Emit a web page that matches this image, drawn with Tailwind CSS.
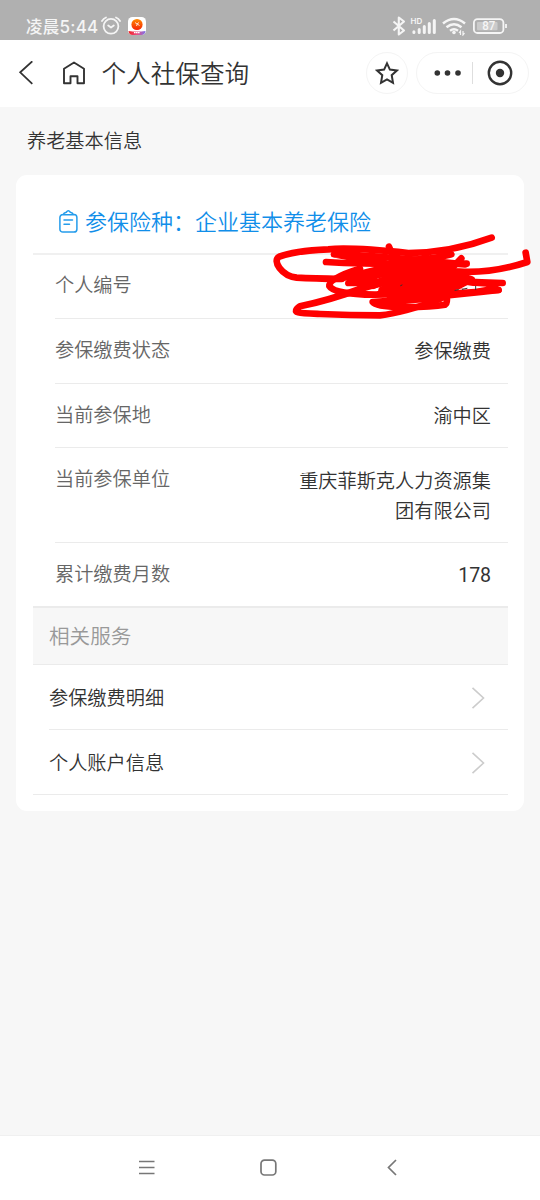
<!DOCTYPE html>
<html lang="zh-CN">
<head>
<meta charset="utf-8">
<title>个人社保查询</title>
<script src="https://cdn.jsdelivr.net/npm/@tailwindcss/browser@4"></script>
</head>
<body class="w-[540px] h-[1200px] overflow-hidden flex flex-col bg-[#f7f7f7] text-[#333] font-[350] font-['Roboto','Noto_Sans_CJK_SC',sans-serif]">
<!-- Status bar -->
<header class="h-10 shrink-0 bg-[#b0b0b0] flex items-start justify-between pl-[26px] pr-8 pt-4 text-[#f5f5f5]">
  <div class="flex items-center h-5">
    <span class="text-[16.5px] font-medium leading-5 whitespace-nowrap w-[75px] pt-[2px]"><span class="tracking-[0.3px]">凌晨</span><span class="font-['Inter'] font-medium text-[17px] tracking-[0.2px]">5:44</span></span>
    <svg class="w-5 h-5 shrink-0" viewBox="0 0 20 20" fill="none" stroke="currentColor" stroke-width="1.8" stroke-linecap="round" stroke-linejoin="round"><circle cx="10" cy="10.3" r="7.4"/><path d="M1 5Q2.5 2.5 5 1.5M19 5Q17.500 2.500 15 1.500M7.200 9.500l2.800 2 2.800-2"/></svg>
    <svg class="w-[18px] h-[18px] ml-[7px] shrink-0" viewBox="0 0 18 18"><defs><linearGradient id="sun" x1="0" y1="0" x2="0" y2="1"><stop offset="0" stop-color="#ff8a00"/><stop offset="1" stop-color="#f52306"/></linearGradient><linearGradient id="strip"><stop offset="0" stop-color="#ee2222"/><stop offset=".5" stop-color="#ed4f83"/><stop offset="1" stop-color="#7774ea"/></linearGradient></defs><rect width="18" height="18" rx="4.500" fill="#fff"/><path d="M.5 14Q9 15 17.500 14Q17 18 13.500 18H4.500Q1 18 .5 14Z" fill="url(#strip)"/><circle cx="9" cy="7.500" r="5.600" fill="url(#sun)"/><path d="M7 5.500l2 1.500 2-1.500m-2.500 3.500l.8-2 2.200 1.500" stroke="#fff" stroke-width=".8" fill="none"/><path d="M6 15.700h6" stroke="#fff" stroke-width="1.300" stroke-dasharray="1.500 .4"/></svg>
  </div>
  <svg class="w-[118px] h-5 mr-[-1px]" viewBox="391 16 118 20" fill="none" stroke="currentColor" stroke-width="2.100">
    <path d="M393.500 21.500l10.500 9-5.200 4V17.500l5.200 4-10.500 9" stroke-linejoin="round"/>
    <text x="410.500" y="24" font-size="8" font-weight="600" fill="currentColor" stroke="none" font-family="Inter">HD</text>
    <g stroke-width="3" stroke-linecap="round"><path d="M413.900 31.800v.7M419.200 29.500v3M424.300 26.500v6M429.300 23.500v9M434.300 20.500v12"/></g>
    <g stroke-width="2.500"><path d="M443 23.500q11-9 22 0M446.500 27.300q7.500-6 15 0M450 30.700q4-2.800 8 0"/></g>
    <circle cx="454" cy="32.500" r="1.800" fill="currentColor" stroke="none"/>
    <path d="M460.500 35v-4l-1.500 2M463 31v4l1.500-2" stroke-width="1.200"/>
    <rect x="473.900" y="19.200" width="29.500" height="13.800" rx="3.600" stroke-width="1.800"/>
    <rect x="477" y="22" width="20.500" height="8.200" rx="1" fill="#cbcbcb" stroke="none"/>
    <text x="482.300" y="30.400" font-size="12" font-weight="500" textLength="13" lengthAdjust="spacingAndGlyphs" fill="currentColor" stroke="none" font-family="Roboto">87</text>
    <path d="M506 24v4" stroke-width="1.800"/>
  </svg>
</header>
<!-- Title bar -->
<nav class="h-[66.500px] shrink-0 bg-white flex items-center pr-[11px] pl-[18px]">
  <svg class="w-4 h-6" viewBox="0 0 16 24" fill="none" stroke="#333" stroke-width="1.800"><path d="M14.300 .3L2.200 11.300l12.100 11.500"/></svg>
  <svg class="w-6 h-6 ml-7" viewBox="0 0 24 24" fill="none" stroke="#333" stroke-width="1.900" stroke-linejoin="round"><path d="M2 7.700L12 1.500l10 6.200V22.300h-6.500v-7h-7v7H2Z"/></svg>
  <h1 class="ml-[15.500px] pt-[3px] text-[24.600px] leading-8 whitespace-nowrap">个人社保查询</h1>
  <div class="ml-auto w-[42px] h-[42px] rounded-full border border-[#f4f4f4] flex items-center justify-center">
    <svg class="w-6 h-6" viewBox="0 0 24 24" fill="none" stroke="#333" stroke-width="2" stroke-linejoin="miter"><path d="M12 2.300l2.900 6.300 7 .9-5.200 4.700 1.300 7.700-6-3.400-6 3.400 1.300-7.700L2.100 9.500l7-.9Z"/></svg>
  </div>
  <div class="ml-2 w-[113px] h-[42px] rounded-full border border-[#f4f4f4] flex items-center pl-[17px]">
    <svg class="w-[28px] h-6" viewBox="0 0 28 24" fill="#333"><circle cx="3.300" cy="12" r="2.800"/><circle cx="13.500" cy="12" r="2.800"/><circle cx="24" cy="12" r="2.800"/></svg>
    <i class="w-px h-[22px] bg-[#dedede] ml-[10px]"></i>
    <svg class="w-[26px] h-[26px] ml-[14px]" viewBox="0 0 26 26" fill="none"><circle cx="13" cy="13" r="11.200" stroke="#333" stroke-width="2.400"/><circle cx="13" cy="13" r="4.200" fill="#333"/></svg>
  </div>
</nav>
<main class="flex-1 px-4">
  <h2 class="h-[68.500px] pl-[11px] pt-[20.500px] text-[19.200px] leading-[30px]">养老基本信息</h2>
  <section class="bg-white h-[636px] rounded-[11px] px-[17px] pr-4">
    <div class="h-[79.500px] border-b-2 border-[#f0f0f0] flex items-center pt-[16px] pl-[25px] text-[22px] text-[#108ee9]">
      <svg class="w-5 h-6 mr-[7px]" viewBox="0 0 20 24" fill="none" stroke="#249ceb" stroke-width="1.500" stroke-linecap="round" stroke-linejoin="round"><path d="M4.800 4.500H5A3 3 0 0 0 1.900 7.500v11.700a2.900 2.900 0 0 0 2.900 2.900h11.200a2.900 2.900 0 0 0 2.900-2.900V7.500A3 3 0 0 0 16 4.500h-.5M5.100 4.700Q5.800 2.700 8.300 2.300Q10.300-.6 12.300 2.300Q14.800 2.700 15.500 4.700ZM6 9.900h8.500M6 14.200h5.500"/></svg>
      <span class="leading-8 pt-[3px]">参保险种：企业基本养老保险</span>
    </div>
    <div class="pl-[22px] text-[19.200px] leading-[30px]">
      <div class="relative h-[64.500px] border-b border-[#ebebeb] pt-[16.500px] text-[#666]">个人编号
        <!-- Red marker over the personal number -->
        <svg class="absolute left-[205px] top-[-29.500px] w-[280px] h-[105px] z-10" viewBox="0 0 840 315" fill="none" stroke="#f00" stroke-width="20" stroke-linecap="round" stroke-linejoin="round">
          <path d="M695 38Q570 84 445 84Q270 66 205 73Q100 78 58 95C35 107 65 153 110 158Q160 161 245 162"/>
          <path d="M797 83l5 28Q700 145 600 140Q480 135 405 122L222 88Q360 92 615 118"/>
          <path d="M198 111Q340 120 620 116M387 65L405 108M574 88Q500 108 430 103"/>
          <path d="M300 131Q205 160 208 183Q222 208 345 209Q520 205 715 195Q680 177 600 166Q450 175 265 174Q340 150 415 116"/>
          <path d="M728 174Q600 172 480 158Q390 164 300 192Q210 225 120 244C90 265 120 265 180 267Q270 271 360 271Q430 264 540 222"/>
          <path d="M604 100L580 125Q450 165 360 205M500 95Q390 150 280 166M716 195Q500 219 338 231Q350 246 420 246Q510 247 555 239Q563 235 560 215M340 231Q390 232 560 216M400 187Q500 191 590 184"/>
          <path d="M430 105L540 112L560 140L635 163L590 185L440 208L365 194L480 158L390 145Z" fill="#f00"/>
          <path d="M400 200h160M390 218h140M245 160L400 122"/>
          <path d="M340 180L420 145M300 175L420 170" stroke-width="24"/>
          <path d="M585 195L645 183L680 185L645 191Z" fill="#fff" stroke="none"/>
          <path d="M647 184v10M607 193l14-3M585 196l10-2M422 182l4-2" stroke="#333" stroke-width="3"/>
        </svg>
      </div>
      <div class="h-[64.500px] border-b border-[#ebebeb] pt-[16.500px] pr-[17px] flex justify-between"><span class="text-[#666]">参保缴费状态</span><span class="pt-px">参保缴费</span></div>
      <div class="h-[64.500px] border-b border-[#ebebeb] pt-[17px] pr-[17px] flex justify-between"><span class="text-[#666]">当前参保地</span><span class="pt-px">渝中区</span></div>
      <div class="h-[95px] border-b border-[#ebebeb] pt-[16.500px] pr-[17px] flex justify-between"><span class="text-[#666]">当前参保单位</span><span class="pt-[2px] text-right w-[194px]">重庆菲斯克人力资源集团有限公司</span></div>
      <div class="h-[63px] pt-[16.500px] pr-[17px] flex justify-between"><span class="text-[#666]">累计缴费月数</span><span class="pt-px font-normal text-[19.600px] tracking-[-0.100px]">178</span></div>
    </div>
    <h3 class="h-[59px] border-t-2 border-b border-[#ebebeb] bg-[#f7f7f7] pl-4 pt-[14px] text-[20.600px] leading-[30px] text-[#999]">相关服务</h3>
    <div class="pl-4 border-b border-[#ebebeb] text-[19.200px] leading-[30px]">
      <div class="h-[65px] border-b border-[#ebebeb] flex items-center justify-between pt-[2px] pr-[23px]"><span class="pt-px">参保缴费明细</span><svg class="w-[14px] h-[22px]" viewBox="0 0 14 22" fill="none" stroke="#ccc" stroke-width="1.600"><path d="M1.500 .8l11 10.200-11 10.200"/></svg></div>
      <div class="h-16 flex items-center justify-between pt-[2px] pr-[23px]"><span class="pt-px">个人账户信息</span><svg class="w-[14px] h-[22px]" viewBox="0 0 14 22" fill="none" stroke="#ccc" stroke-width="1.600"><path d="M1.500 .8l11 10.200-11 10.200"/></svg></div>
    </div>
  </section>
</main>
<!-- System navigation -->
<footer class="h-[65px] shrink-0 bg-white border-t border-[#f0f0f0] flex items-center pl-[138px] text-[#777]">
  <svg class="w-[18px] h-[18px]" viewBox="0 0 18 18" fill="none" stroke="currentColor" stroke-width="1.500"><path d="M1 2.500h15.500M1 8.500h15.500M1 14.500h15.500"/></svg>
  <svg class="w-[18px] h-[18px] ml-[103px]" viewBox="0 0 18 18" fill="none" stroke="currentColor" stroke-width="1.700"><rect x="2" y="1.200" width="14.800" height="14.800" rx="3.500"/></svg>
  <svg class="w-[14px] h-[18px] ml-[108px]" viewBox="0 0 14 18" fill="none" stroke="currentColor" stroke-width="1.700"><path d="M11 1L3.500 8.500l7.500 7.500"/></svg>
</footer>
</body>
</html>
